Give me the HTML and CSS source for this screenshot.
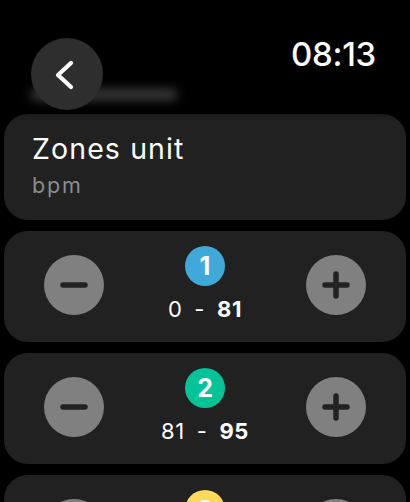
FILE: index.html
```html
<!DOCTYPE html>
<html lang="en">
<head>
<meta charset="utf-8">
<title>Zones unit</title>
<link rel="stylesheet" href="styles.css">
</head>
<body>
<div class="screen">
  <header class="header">
    <div class="ghost-title"></div>
    <button class="back" aria-label="Back">
      <svg width="72" height="72" viewBox="0 0 72 72"><path d="M40 25 L27 37 L40 49" fill="none" stroke="#fff" stroke-width="4.2" stroke-linecap="round" stroke-linejoin="round"/></svg>
    </button>
    <span class="time">08:13</span>
  </header>
  <main class="list">
    <section class="card unit">
      <div class="unit-title">Zones unit</div>
      <div class="unit-value">bpm</div>
    </section>
    <section class="card zone">
      <button class="step" aria-label="Decrease"><svg width="60" height="60" viewBox="0 0 60 60"><path d="M19 30h22" stroke="#222" stroke-width="5.5" stroke-linecap="round"/></svg></button>
      <div class="zone-center">
        <span class="badge blue">1</span>
        <div class="range"><span>0</span><span>-</span><span class="hi">81</span></div>
      </div>
      <button class="step" aria-label="Increase"><svg width="60" height="60" viewBox="0 0 60 60"><path d="M19 30h22M30 19v22" stroke="#222" stroke-width="5.5" stroke-linecap="round"/></svg></button>
    </section>
    <section class="card zone">
      <button class="step" aria-label="Decrease"><svg width="60" height="60" viewBox="0 0 60 60"><path d="M19 30h22" stroke="#222" stroke-width="5.5" stroke-linecap="round"/></svg></button>
      <div class="zone-center">
        <span class="badge green">2</span>
        <div class="range"><span>81</span><span>-</span><span class="hi">95</span></div>
      </div>
      <button class="step" aria-label="Increase"><svg width="60" height="60" viewBox="0 0 60 60"><path d="M19 30h22M30 19v22" stroke="#222" stroke-width="5.5" stroke-linecap="round"/></svg></button>
    </section>
    <section class="card zone">
      <button class="step" aria-label="Decrease"><svg width="60" height="60" viewBox="0 0 60 60"><path d="M19 30h22" stroke="#222" stroke-width="5.5" stroke-linecap="round"/></svg></button>
      <div class="zone-center">
        <span class="badge yellow">3</span>
      </div>
      <button class="step" aria-label="Increase"><svg width="60" height="60" viewBox="0 0 60 60"><path d="M19 30h22M30 19v22" stroke="#222" stroke-width="5.5" stroke-linecap="round"/></svg></button>
    </section>
  </main>
</div>
</body>
</html>
```
FILE: styles.css
```css
html, body {
  margin: 0;
  padding: 0;
  background: #000;
}
body {
  font-family: Inter, "Noto Sans", "Liberation Sans", sans-serif;
  color: #fff;
  width: 410px;
  height: 502px;
  overflow: hidden;
}
.screen {
  display: flex;
  flex-direction: column;
}
.header {
  position: relative;
  height: 114px;
  box-sizing: border-box;
  padding: 38px 33px 0 31px;
  display: flex;
  justify-content: space-between;
  align-items: flex-start;
}
.ghost-title {
  position: absolute;
  left: 30px;
  top: 88px;
  width: 148px;
  height: 13px;
  border-radius: 7px;
  background: rgba(255, 255, 255, 0.2);
  filter: blur(5px);
}
.back {
  position: relative;
  width: 72px;
  height: 72px;
  border: 0;
  padding: 0;
  border-radius: 50%;
  background: #2e2e2e;
  display: flex;
}
.time {
  font-size: 33px;
  line-height: 1;
  font-weight: 500;
  letter-spacing: -0.3px;
  margin-right: 1px;
}
.list {
  display: flex;
  flex-direction: column;
  gap: 11px;
  padding: 0 4px;
}
.card {
  background: #212121;
  border-radius: 24px;
}
.unit {
  height: 106px;
  box-sizing: border-box;
  padding: 18px 28px 0;
  background: linear-gradient(#1b1b1b 0, #212121 8px);
}
.unit-title {
  font-size: 28.5px;
  line-height: 34px;
  letter-spacing: 1.1px;
}
.unit-value {
  margin-top: 6px;
  font-size: 21.5px;
  line-height: 26px;
  color: #8c8c8c;
  letter-spacing: 1.8px;
}
.zone {
  height: 111px;
  flex-shrink: 0;
  box-sizing: border-box;
  padding: 0 40px;
  display: flex;
  align-items: center;
  justify-content: space-between;
}
.step {
  width: 60px;
  height: 60px;
  border: 0;
  padding: 0;
  border-radius: 50%;
  background: #808080;
  display: flex;
  margin-top: -3px;
}
.zone-center {
  align-self: flex-start;
  padding-top: 15px;
  display: flex;
  flex-direction: column;
  align-items: center;
}
.badge {
  width: 40px;
  height: 40px;
  border-radius: 50%;
  display: flex;
  align-items: center;
  justify-content: center;
  font-size: 25px;
  font-weight: 700;
  color: #fff;
}
.blue { background: #3fa9d9; }
.green { background: #00c398; }
.yellow { background: #ffd95e; }
.range {
  margin-top: 10px;
  display: flex;
  gap: 12px;
  font-size: 22px;
  line-height: 26px;
  letter-spacing: 0.6px;
}
.range .hi {
  font-weight: 700;
}
```
